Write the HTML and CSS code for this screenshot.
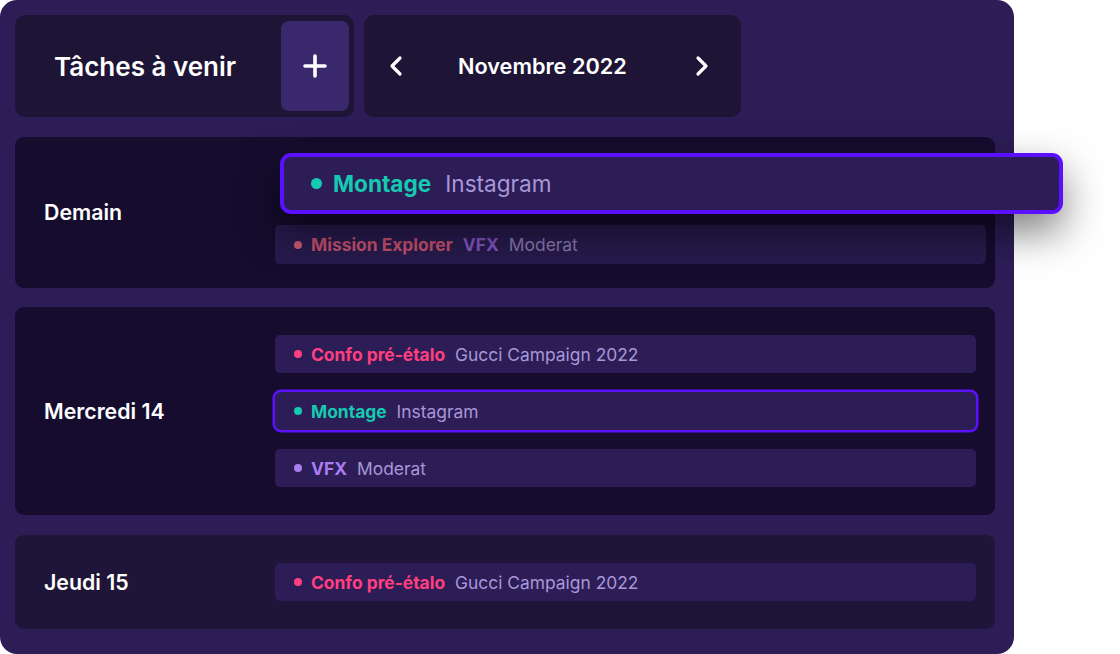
FILE: index.html
```html
<!DOCTYPE html>
<html lang="fr">
<head>
<meta charset="utf-8">
<title>Tâches à venir</title>
<link rel="stylesheet" href="styles.css">
</head>
<body>
<div class="panel">
  <div class="header">
    <div class="hcard title-card">
      <span class="title">Tâches à venir</span>
      <button class="add-btn" aria-label="Ajouter">
        <svg width="26" height="26" viewBox="0 0 26 26"><path d="M13 3v20M3 13h20" stroke="#fff" stroke-width="3.6" stroke-linecap="round" fill="none"/></svg>
      </button>
    </div>
    <div class="hcard month-card">
      <svg class="chev" width="14" height="22" viewBox="0 0 14 22"><path d="M11 3L3 11l8 8" stroke="#fff" stroke-width="3.2" stroke-linecap="round" stroke-linejoin="round" fill="none"/></svg>
      <span class="month">Novembre 2022</span>
      <svg class="chev chev-next" width="14" height="22" viewBox="0 0 14 22"><path d="M3 3l8 8-8 8" stroke="#fff" stroke-width="3.2" stroke-linecap="round" stroke-linejoin="round" fill="none"/></svg>
    </div>
  </div>

  <div class="day day-dark day-first">
    <div class="day-label">Demain</div>
    <div class="tasks">
      <div class="placeholder"></div>
      <div class="task faded">
        <span class="dot d-faded"></span>
        <span class="t-name c-faded">Mission Explorer</span>
        <span class="t-name c-vfx-faded">VFX</span>
        <span class="t-sub c-sub-faded">Moderat</span>
      </div>
    </div>
    <div class="drag-card">
      <span class="dot big d-teal"></span>
      <span class="t-name big c-teal">Montage</span>
      <span class="t-sub big">Instagram</span>
    </div>
  </div>

  <div class="day day-dark day-mid">
    <div class="day-label">Mercredi 14</div>
    <div class="tasks">
      <div class="task">
        <span class="dot d-pink"></span>
        <span class="t-name c-pink">Confo pré-étalo</span>
        <span class="t-sub">Gucci Campaign 2022</span>
      </div>
      <div class="task selected">
        <span class="dot d-teal"></span>
        <span class="t-name c-teal">Montage</span>
        <span class="t-sub">Instagram</span>
      </div>
      <div class="task">
        <span class="dot d-violet"></span>
        <span class="t-name c-violet">VFX</span>
        <span class="t-sub">Moderat</span>
      </div>
    </div>
  </div>

  <div class="day day-light day-last">
    <div class="day-label">Jeudi 15</div>
    <div class="tasks">
      <div class="task">
        <span class="dot d-pink"></span>
        <span class="t-name c-pink">Confo pré-étalo</span>
        <span class="t-sub">Gucci Campaign 2022</span>
      </div>
    </div>
  </div>
</div>
</body>
</html>
```
FILE: styles.css
```css
html, body {
  margin: 0;
  padding: 0;
  background: #ffffff;
}
body {
  font-family: "Inter", "Liberation Sans", sans-serif;
  width: 1120px;
  height: 654px;
  overflow: hidden;
}
.panel {
  width: 1014px;
  height: 654px;
  box-sizing: border-box;
  background: #2c1d57;
  border-radius: 17px;
  padding: 15px 19px 0 15px;
  display: flex;
  flex-direction: column;
}
.header {
  display: flex;
  gap: 10px;
  height: 102px;
  margin-bottom: 20px;
}
.hcard {
  background: #1e1536;
  border-radius: 10px;
  box-sizing: border-box;
  height: 102px;
  display: flex;
  align-items: center;
}
.title-card {
  width: 339px;
  padding: 6px 5px 6px 39px;
  justify-content: space-between;
}
.title {
  color: #fff;
  font-weight: 600;
  font-size: 26px;
}
.add-btn {
  width: 68px;
  height: 90px;
  border: 0;
  border-radius: 8px;
  background: #3a286c;
  display: flex;
  align-items: center;
  justify-content: center;
  padding: 0;
}
.month-card {
  width: 377px;
  padding: 0 32px 0 25px;
}
.month {
  color: #fff;
  font-weight: 600;
  font-size: 21.7px;
  margin-left: 55px;
}
.chev { display: block; flex: none; }
.chev-next { margin-left: auto; }

.day {
  position: relative;
  width: 980px;
  box-sizing: border-box;
  border-radius: 9px;
  display: flex;
  align-items: center;
  padding: 28px 19px 28px 29px;
}
.day-dark { background: #150c2e; }
.day-light { background: #1f1538; }
.day-first { height: 151px; margin-bottom: 19px; padding-bottom: 24px; }
.day-first .day-label { margin-bottom: 6px; }
.day-mid { height: 208px; margin-bottom: 20px; }
.day-last { height: 94px; }
.day-label {
  width: 231px;
  color: #fff;
  font-weight: 600;
  font-size: 21.3px;
}
.tasks {
  flex: 1;
  display: flex;
  flex-direction: column;
  gap: 19px;
}
.placeholder { height: 38px; }
.task {
  height: 38px;
  box-sizing: border-box;
  background: #2c1d57;
  border-radius: 5px;
  display: flex;
  align-items: center;
  padding-left: 19px;
  font-size: 17.4px;
}
.task.selected {
  box-shadow: 0 0 0 2.5px #5b10ff;
  border-radius: 6px;
}
.task.faded {
  height: 39px;
  margin-right: -10px;
  margin-top: 3px;
  background: #271a4c;
}
.dot {
  width: 8px;
  height: 8px;
  border-radius: 50%;
  flex: none;
  margin-right: 9px;
}
.dot.big {
  width: 11px;
  height: 11px;
  margin-right: 11px;
}
.t-name {
  font-weight: 700;
  margin-right: 10px;
}
.t-name.big { margin-right: 14px; }
.t-sub {
  color: #a897d8;
  font-weight: 400;
}
.big { font-size: 22.6px; }
.d-pink { background: #ff3f7f; }
.c-pink { color: #ff3f7f; }
.d-teal { background: #16c9b0; }
.c-teal { color: #16c9b0; }
.d-violet { background: #a97ff0; }
.c-violet { color: #a97cf0; }
.d-faded { background: #c35a6e; }
.c-faded { color: #c24f6c; }
.c-vfx-faded { color: #8153c2; }
.c-sub-faded { color: #8878b0; }

.drag-card {
  position: absolute;
  left: 265px;
  top: 16px;
  width: 783px;
  height: 61px;
  box-sizing: border-box;
  border: 4px solid #5a0fff;
  border-radius: 11px;
  background: #2c1d57;
  display: flex;
  align-items: center;
  padding-left: 27px;
  box-shadow: 0 18px 40px rgba(0, 0, 0, 0.5);
}
```
